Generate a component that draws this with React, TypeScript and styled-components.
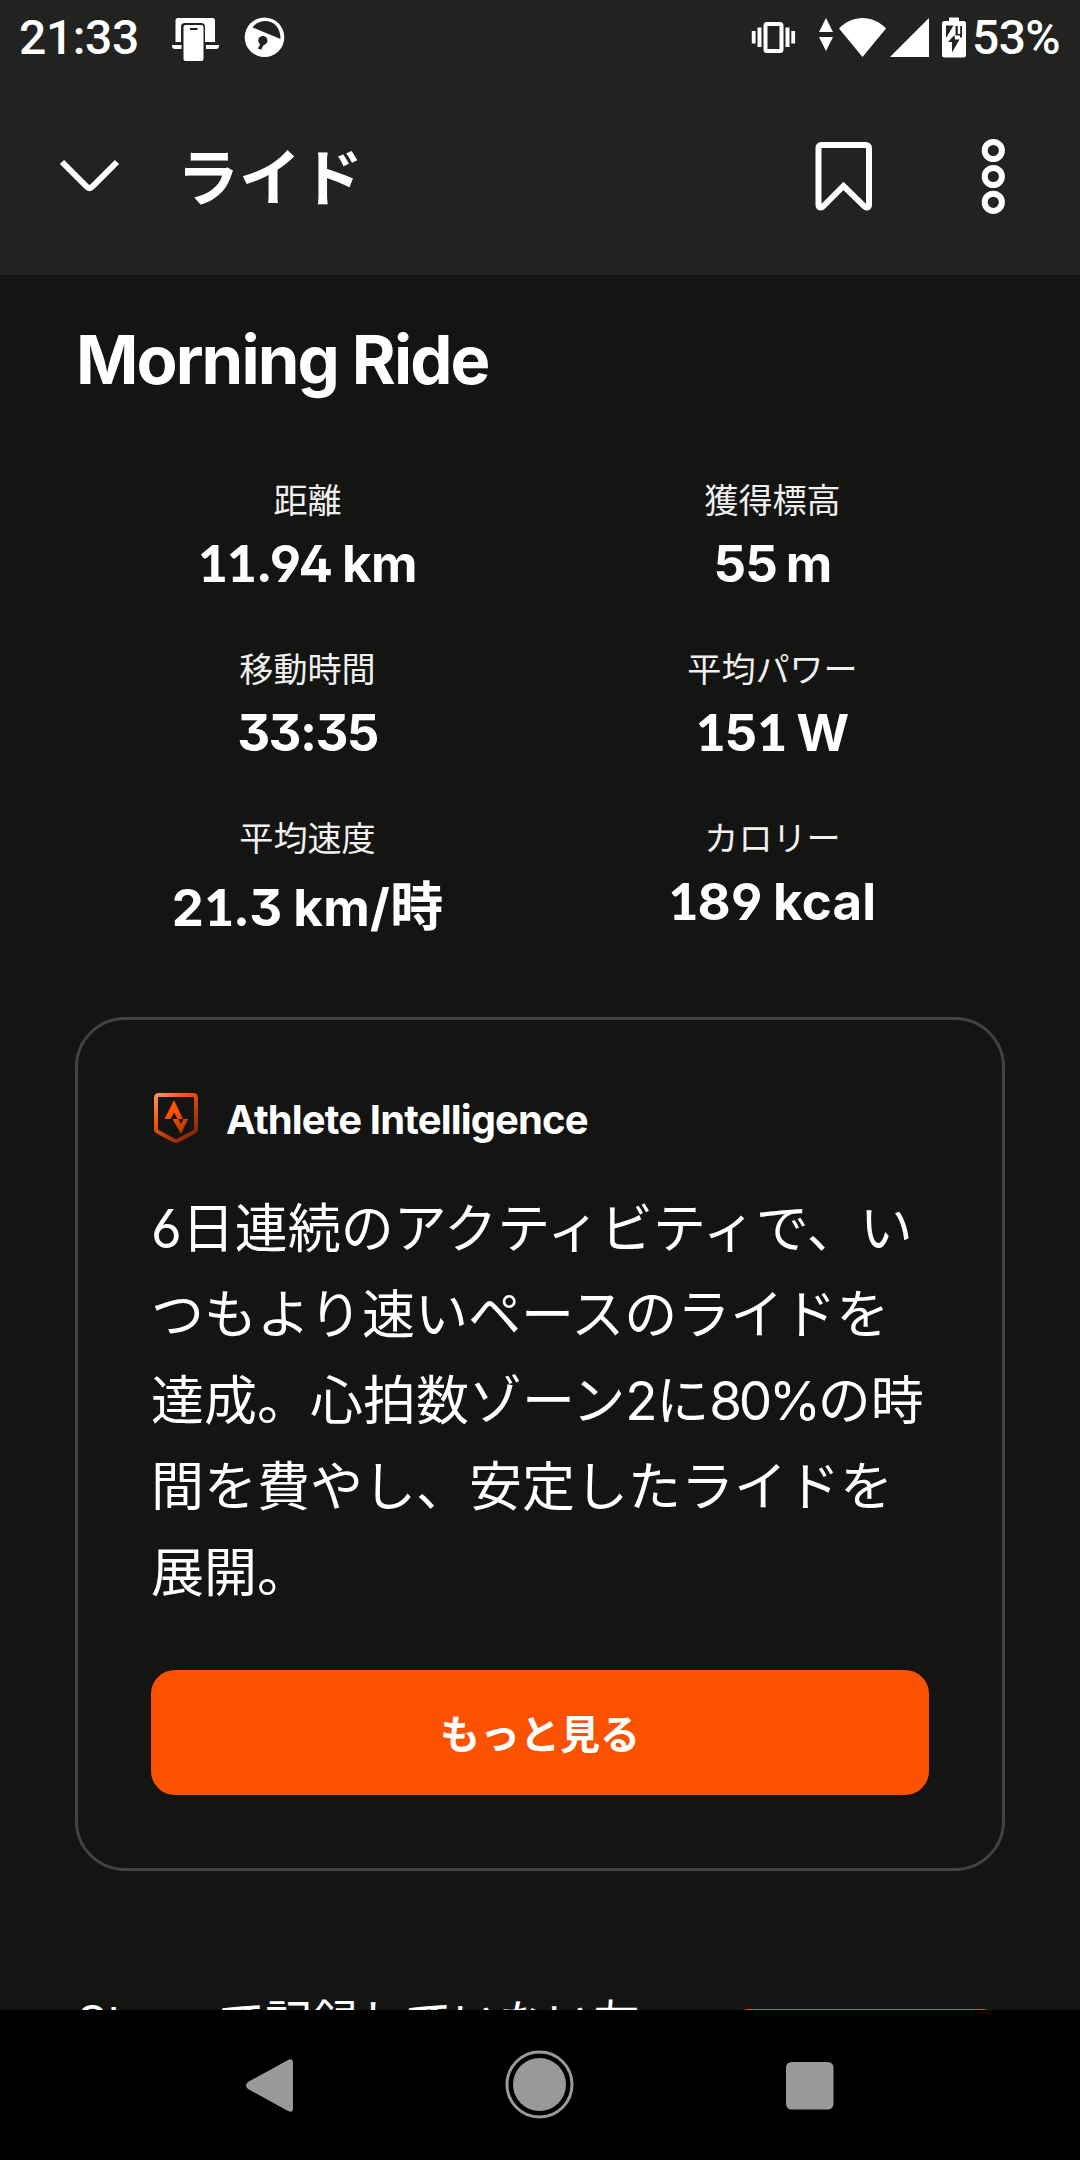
import React from "react";
import styled, { createGlobalStyle } from "styled-components";

const latin = `Inter, "Noto Sans CJK JP", sans-serif`;

const GlobalStyle = createGlobalStyle`
  *, *::before, *::after { box-sizing: border-box; }
  html, body { margin: 0; padding: 0; background: #000; }
  body { font-family: ${latin}; color: #fff; }
`;

const Screen = styled.div`
  width: 1080px;
  height: 2160px;
  display: flex;
  flex-direction: column;
  overflow: hidden;
  background: #141413;
`;

const TopArea = styled.header`
  flex: none;
  height: 275px;
  background: #222220;
`;

const StatusBar = styled.div`
  height: 75px;
  display: flex;
  align-items: flex-start;
  justify-content: space-between;
`;

const StatusGroup = styled.div`
  display: flex;
  align-items: flex-start;
`;

const StatusText = styled.span<{ $indent?: number; $width: number; $spacing: string }>`
  font: 500 48px/56px Roboto, sans-serif;
  letter-spacing: ${(p) => p.$spacing};
  width: ${(p) => p.$width}px;
  margin-left: ${(p) => p.$indent ?? 0}px;
  padding-top: 10px;
  white-space: nowrap;
`;

const Glyph = styled.svg`
  display: block;
  flex: none;
`;

const AppBar = styled.div`
  height: 200px;
  display: flex;
  align-items: flex-start;
`;

const AppTitle = styled.h1`
  margin: 54px 0 0;
  flex: 1;
  font: 700 62px/90px "Noto Sans CJK JP", sans-serif;
`;

const Content = styled.main`
  flex: none;
  height: 1735px;
  padding: 0 75px;
  overflow: hidden;
`;

const ActivityName = styled.h2`
  margin: 0;
  padding: 43px 0 0 1px;
  height: 198px;
  font-weight: 700;
  font-size: 67px;
  line-height: 84px;
  letter-spacing: -1.9px;
  white-space: nowrap;
`;

const StatGrid = styled.dl`
  margin: 0;
  display: grid;
  grid-template-columns: 1fr 1fr;
  grid-auto-rows: 169px;
  height: 544px;
`;

const Stat = styled.div`
  display: flex;
  flex-direction: column;
  align-items: center;
`;

const StatLabel = styled.dt`
  font: 400 34.1px/50px "Noto Sans CJK JP", sans-serif;
  color: #f0f0ee;
`;

const StatValue = styled.dd<{ $spacing: string; $drop?: boolean }>`
  margin: ${(p) => (p.$drop ? 12 : 6)}px 0 0;
  font-size: 51px;
  line-height: 70px;
  font-weight: 700;
  letter-spacing: ${(p) => p.$spacing};
  word-spacing: -2px;
  font-feature-settings: "cv02", "cv03", "cv04", "cv09";
  white-space: nowrap;
`;

/* Slab-footed figure one */
const FootedOne = styled.span`
  font-family: Lato, sans-serif;
  font-weight: 900;
  font-size: 51.5px;
  line-height: 1;
  letter-spacing: -1px;
`;

const Kanji = styled.span`
  font-family: "Noto Sans CJK JP", sans-serif;
  font-weight: 700;
  font-size: 53px;
  line-height: 1;
  letter-spacing: 0;
`;

const InsightCard = styled.section`
  height: 854px;
  padding: 71px 73px 0;
  border: 3px solid #424240;
  border-radius: 50px;
`;

const InsightHeader = styled.div`
  display: flex;
  align-items: flex-start;
  height: 95px;
`;

const InsightTitle = styled.h3`
  margin: 4px 0 0 25px;
  font-size: 40px;
  line-height: 50px;
  font-weight: 700;
  letter-spacing: -0.85px;
  white-space: nowrap;
`;

const InsightText = styled.p`
  margin: 0;
  height: 484px;
  font: 400 53px/86px Inter, "Noto Sans CJK JP", sans-serif;
  font-feature-settings: "cv03", "cv04";
  white-space: nowrap;
`;

const Figure = styled.span<{ $spacing: string }>`
  letter-spacing: ${(p) => p.$spacing};
`;

const MoreButton = styled.button`
  display: flex;
  align-items: center;
  justify-content: center;
  width: 100%;
  height: 125px;
  padding: 0 0 2px;
  border: 0;
  border-radius: 24px;
  background: #fc5200;
  color: #fff;
  font: 700 40px/58px "Noto Sans CJK JP", sans-serif;
`;

const PromptRow = styled.div`
  display: flex;
  align-items: flex-start;
  justify-content: space-between;
  margin-top: 116px;
`;

const PromptText = styled.p`
  margin: 0 0 0 2px;
  font: 400 47px/70px Inter, "Noto Sans CJK JP", sans-serif;
  white-space: nowrap;
`;

const PromptButton = styled.button`
  width: 279px;
  height: 100px;
  margin-top: 22px;
  border: 3px solid #fc5200;
  border-radius: 24px;
  background: transparent;
`;

const NavBar = styled.nav`
  flex: none;
  height: 150px;
  background: #000;
`;

type StatItem = { label: string; value: string; spacing: string; kanji?: string };

const stats: StatItem[] = [
  { label: "距離", value: "11.94 km", spacing: "-0.6px" },
  { label: "獲得標高", value: "55 m", spacing: "-1px" },
  { label: "移動時間", value: "33:35", spacing: "-1.6px" },
  { label: "平均パワー", value: "151 W", spacing: "0.1px" },
  { label: "平均速度", value: "21.3 km/", spacing: "0.4px", kanji: "時" },
  { label: "カロリー", value: "189 kcal", spacing: "0.3px" },
];

const insightLines: React.ReactNode[] = [
  "6日連続のアクティビティで、い",
  "つもより速いペースのライドを",
  <>
    達成。心拍数ゾーン<Figure $spacing="-1.4px">2</Figure>に<Figure $spacing="-3.3px">80%</Figure>の時
  </>,
  "間を費やし、安定したライドを",
  "展開。",
];

const Figures = ({ text }: { text: string }) => (
  <>
    {text.split(/(1+)/).map((part, i) =>
      part.startsWith("1") ? <FootedOne key={i}>{part}</FootedOne> : part
    )}
  </>
);

const NotificationIcons = () => (
  <Glyph width="130" height="75" viewBox="160 0 130 75" fill="#fff">
    <path d="M175.500 42V20.500q0-2.500 2.500-2.500h34.500q2.500 0 2.500 2.500V42h-10V27q0-4-4-4h-16q-4 0-4 4v15z" />
    <path d="M172 45h9.500v4H175q-3 0-3-3zM206 45h13v1q0 3-3 3h-10z" />
    <path fillRule="evenodd" d="M185.500 25h16q2 0 2 2v32q0 2-2 2h-16q-2 0-2-2V27q0-2 2-2zm4.500 3v2h7.500v-2z" />
    <circle cx="264.500" cy="37.300" r="19.800" />
    <path d="M252.500 27.500C258 20 269 19 275.500 25c3.500 3.500 5 8.500 5 14z" fill="#222220" />
    <circle cx="262.800" cy="40.500" r="4.600" fill="#222220" />
    <path d="M261.500 42l-3.600 6.500 3.200 1.300 3.500-6.500z" fill="#222220" />
  </Glyph>
);

const SystemIcons = () => (
  <Glyph width="222" height="75" viewBox="750 0 222 75" fill="#fff">
    <rect x="765.500" y="24" width="16" height="27" rx="1.500" fill="none" stroke="#fff" strokeWidth="4" />
    <path d="M751.800 31h3.800v12.500h-3.800zM757.500 27.500h4v19.500h-4zM785.500 27.500h4v19.500h-4zM791.300 31h3.800v12.500h-3.800z" />
    <path d="M826 18l7 14h-14zM826 51l-7-14h14z" />
    <path d="M862.500 57L839 28.500c13-14 34-14 47 0z" />
    <path d="M890 57h39V18z" />
    <path d="M949 17.500h10V21h4.500q2.500 0 2.500 2.500V55q0 2.500-2.500 2.500h-19q-2.500 0-2.500-2.500V23.500q0-2.500 2.500-2.500h4.500z" />
    <path d="M946 25.500h7.500L946 38z" fill="#222220" />
    <path d="M955.500 26v9.500h4.500v2h2V26h-1.800v8h-2.400v-8z" fill="#222220" />
    <path d="M954.500 35l-6.500 7h4v10.500l7.500-13h-4.500z" fill="#222220" />
  </Glyph>
);

const CollapseIcon = () => (
  <Glyph width="177" height="200" viewBox="0 75 177 200" fill="none" stroke="#fff" strokeWidth="6">
    <path d="M62 162L86.500 186.500Q89.500 189.500 92.500 186.500L117 162" />
  </Glyph>
);

const AppActions = () => (
  <Glyph width="280" height="200" viewBox="800 75 280 200" fill="none" stroke="#fff" strokeWidth="6">
    <path d="M821.500 145h44q3.500 0 3.500 3.500v56q0 3-2.500 3-1 0-2-1L843.500 186l-20.500 20.500q-1 1-2 1-2.500 0-2.500-3v-56q0-3.500 3-3.500z" />
    <circle cx="993.300" cy="150.500" r="8.600" />
    <circle cx="993.300" cy="176.500" r="8.600" />
    <circle cx="993.300" cy="202.300" r="8.600" />
  </Glyph>
);

const ShieldIcon = () => (
  <Glyph width="50" height="54" viewBox="151 1091 50 54">
    <defs>
      <linearGradient id="shieldEdge" x1="154" y1="1093" x2="198" y2="1143" gradientUnits="userSpaceOnUse">
        <stop offset="0" stopColor="#ff9a6b" />
        <stop offset=".35" stopColor="#f4560f" />
        <stop offset=".65" stopColor="#b03808" />
        <stop offset="1" stopColor="#6d1e04" />
      </linearGradient>
      <linearGradient id="shieldMark" x1="170" y1="1100" x2="184" y2="1134" gradientUnits="userSpaceOnUse">
        <stop offset=".4" stopColor="#fc5200" />
        <stop offset="1" stopColor="#a83405" />
      </linearGradient>
    </defs>
    <path d="M159 1095h34q3 0 3 3v31q0 2-2 3l-16 8.500q-2 1-4 0l-16-8.500q-2-1-2-3v-31q0-3 3-3z" fill="none" stroke="url(#shieldEdge)" strokeWidth="4" />
    <path d="M174 1100l9 19h-5.500l-3.500-6.500-3.500 6.500H164.500z" fill="url(#shieldMark)" />
    <path d="M172.500 1119h6l2.500 5 2.500-5h4.500l-7 15z" fill="url(#shieldMark)" />
  </Glyph>
);

const NavIcons = () => (
  <Glyph width="1080" height="150" viewBox="0 2010 1080 150" fill="#999">
    <path d="M248 2082L288 2060q5-2.500 5 3v45q0 5.500-5 3L248 2089q-4-3.500 0-7z" />
    <circle cx="539.500" cy="2084.500" r="26.500" />
    <circle cx="539.500" cy="2084.500" r="32.500" fill="none" stroke="#999" strokeWidth="3" />
    <rect x="786" y="2062" width="47.500" height="47.500" rx="5.500" />
  </Glyph>
);

export default function App() {
  return (
    <Screen>
      <GlobalStyle />
      <TopArea>
        <StatusBar>
          <StatusGroup>
            <StatusText $indent={19} $width={141} $spacing="-0.4px">21:33</StatusText>
            <NotificationIcons />
          </StatusGroup>
          <StatusGroup>
            <SystemIcons />
            <StatusText $width={108} $spacing="-0.6px">53%</StatusText>
          </StatusGroup>
        </StatusBar>
        <AppBar>
          <CollapseIcon />
          <AppTitle>ライド</AppTitle>
          <AppActions />
        </AppBar>
      </TopArea>
      <Content>
        <ActivityName>Morning Ride</ActivityName>
        <StatGrid>
          {stats.map((s) => (
            <Stat key={s.label}>
              <StatLabel>{s.label}</StatLabel>
              <StatValue $spacing={s.spacing} $drop={Boolean(s.kanji)}>
                <Figures text={s.value} />
                {s.kanji && <Kanji>{s.kanji}</Kanji>}
              </StatValue>
            </Stat>
          ))}
        </StatGrid>
        <InsightCard>
          <InsightHeader>
            <ShieldIcon />
            <InsightTitle>Athlete Intelligence</InsightTitle>
          </InsightHeader>
          <InsightText>
            {insightLines.map((line, i) => (
              <React.Fragment key={i}>
                {line}
                <br />
              </React.Fragment>
            ))}
          </InsightText>
          <MoreButton>もっと見る</MoreButton>
        </InsightCard>
        <PromptRow>
          <PromptText>Stravaで記録していない友</PromptText>
          <PromptButton />
        </PromptRow>
      </Content>
      <NavBar>
        <NavIcons />
      </NavBar>
    </Screen>
  );
}
